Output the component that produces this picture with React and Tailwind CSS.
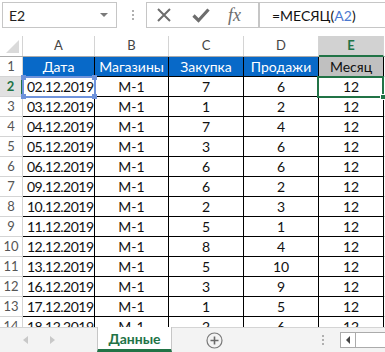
import React from "react";

const ROWS = [
  ["02.12.2019", "М-1", "7", "6", "12"],
  ["03.12.2019", "М-1", "1", "2", "12"],
  ["04.12.2019", "М-1", "7", "4", "12"],
  ["05.12.2019", "М-1", "3", "6", "12"],
  ["06.12.2019", "М-1", "6", "6", "12"],
  ["09.12.2019", "М-1", "6", "2", "12"],
  ["10.12.2019", "М-1", "2", "3", "12"],
  ["11.12.2019", "М-1", "5", "1", "12"],
  ["12.12.2019", "М-1", "8", "4", "12"],
  ["13.12.2019", "М-1", "5", "10", "12"],
  ["16.12.2019", "М-1", "3", "9", "12"],
  ["17.12.2019", "М-1", "1", "5", "12"],
  ["18.12.2019", "М-1", "2", "6", "12"],
];

const COLS = ["A", "B", "C", "D", "E"];
const WIDTHS = ["w-[72px]", "w-[74px]", "w-[75px]", "w-[75px]", "w-[65px]"];

const Toolbar = () => (
  <div className="h-[36px] flex items-start pt-[2px] pl-[2px] bg-white">
    {/* Name box */}
    <div className="w-[115px] h-[26px] border border-[#c6c6c6] flex items-center justify-between pl-[6px] pr-[8px]">
      <span className="text-[14px] text-[#222]">E2</span>
      <span className="w-0 h-0 border-l-[4px] border-r-[4px] border-t-[4px] border-l-transparent border-r-transparent border-t-[#7a7a7a]" />
    </div>
    <div className="w-[29px] h-[26px] flex flex-col items-center justify-center gap-[2px] pl-[2px]">
      <span className="w-[2px] h-[2px] bg-[#b0b0b0]" />
      <span className="w-[2px] h-[2px] bg-[#b0b0b0]" />
      <span className="w-[2px] h-[2px] bg-[#b0b0b0]" />
    </div>
    {/* Function buttons */}
    <div className="w-[113px] h-[26px] border border-[#c6c6c6] flex items-center pl-[9px]">
      <svg width="16" height="16" viewBox="0 0 16 16" className="mr-[20px]">
        <path d="M2 2 L14 14 M14 2 L2 14" stroke="#6d6d6d" strokeWidth="2" />
      </svg>
      <svg width="18" height="16" viewBox="0 0 18 16" className="mr-[18px]">
        <path d="M1.5 8.5 L6.5 13.5 L16.5 2.5" stroke="#6d6d6d" strokeWidth="3.2" fill="none" />
      </svg>
      <span className="text-[18px] italic text-[#6d6d6d] leading-none [font-family:'Liberation_Serif',serif]">fx</span>
    </div>
    {/* Formula */}
    <div className="flex-1 h-[26px] border border-r-0 border-[#c6c6c6] flex items-center pl-[12px] text-[14px] text-[#111]">
      =МЕСЯЦ(<span className="text-[#4a78d0]">A2</span>)
    </div>
  </div>
);

const ColumnHeader = () => (
  <div className="flex h-[21px] border-b border-[#ababab] bg-white">
    <div className="w-[23px] shrink-0 border-r border-[#d4d4d4] flex items-end justify-end pr-[3px] pb-[3px]">
      <svg width="13" height="13" viewBox="0 0 13 13">
        <path d="M13 0 L13 13 L0 13 Z" fill="#dadada" />
      </svg>
    </div>
    {COLS.map((c, i) => (
      <div
        key={c}
        className={`${WIDTHS[i]} shrink-0 border-r border-[#d4d4d4] flex items-center justify-center text-[13px] ${
          c === "E"
            ? "bg-[#d2d2d2] text-[#217346] font-bold border-b-2 border-b-[#217346] -mb-[1px]"
            : "text-[#444]"
        }`}
      >
        {c}
      </div>
    ))}
    <div className="flex-1" />
  </div>
);

const RowHeader = ({ n }) => (
  <div
    className={`w-[23px] shrink-0 border-r border-b border-[#d4d4d4] flex items-center justify-center text-[13px] ${
      n === 2 ? "bg-[#e1e1e1] text-[#217346] font-bold border-r-2 border-r-[#217346]" : "text-[#555]"
    }`}
  >
    {n}
  </div>
);

const Grid = () => (
  <div className="h-[291px] overflow-hidden relative">
    <ColumnHeader />
    {/* header row */}
    <div className="flex h-[20px]">
      <RowHeader n={1} />
      {["Дата", "Магазины", "Закупка", "Продажи"].map((t, i) => (
        <div
          key={t}
          className={`${WIDTHS[i]} shrink-0 bg-[#0869c8] text-white border-r border-b border-black flex items-center justify-center text-[14px]`}
        >
          {t}
        </div>
      ))}
      <div className="w-[65px] shrink-0 bg-[#c0c0c0] text-[#111] border-r border-b border-black flex items-center justify-center text-[14px]">
        Месяц
      </div>
      <div className="flex-1 border-b border-[#d4d4d4]" />
    </div>
    {ROWS.map((r, ri) => (
      <div key={ri} className="flex h-[20px]">
        <RowHeader n={ri + 2} />
        {r.map((v, ci) => (
          <div
            key={ci}
            className={`${WIDTHS[ci]} shrink-0 border-r border-b border-black flex items-center text-[14px] text-[#111] ${
              ci === 0 ? "pl-[4px] tracking-[-0.5px]" : "justify-center"
            }`}
          >
            {v}
          </div>
        ))}
        <div className="flex-1 border-b border-[#d4d4d4]" />
      </div>
    ))}
    {/* A2 reference highlight */}
    <div className="absolute left-[22px] top-[40px] w-[74px] h-[22px] border-2 border-[#6f93db]">
      <span className="absolute -left-[3px] -top-[3px] w-[5px] h-[5px] bg-[#6f93db]" />
      <span className="absolute -right-[3px] -top-[3px] w-[5px] h-[5px] bg-[#6f93db]" />
      <span className="absolute -left-[3px] -bottom-[3px] w-[5px] h-[5px] bg-[#6f93db]" />
      <span className="absolute -right-[3px] -bottom-[3px] w-[5px] h-[5px] bg-[#6f93db]" />
    </div>
    {/* E2 selection */}
    <div className="absolute left-[317px] top-[40px] w-[67px] h-[22px] border-2 border-[#217346]">
      <span className="absolute -right-[4px] -bottom-[4px] w-[6px] h-[6px] bg-[#217346] border border-white" />
    </div>
  </div>
);

const TabBar = () => (
  <div className="h-[25px] flex items-stretch bg-[#f3f3f3] border-t border-[#d4d4d4]">
    <div className="w-[97px] flex items-center pl-[23px] gap-[22px]">
      <span className="w-0 h-0 border-t-[4px] border-b-[4px] border-r-[5px] border-t-transparent border-b-transparent border-r-[#c8c8c8]" />
      <span className="w-0 h-0 border-t-[4px] border-b-[4px] border-l-[5px] border-t-transparent border-b-transparent border-l-[#c8c8c8]" />
    </div>
    <div className="w-[75px] -mt-[1px] bg-white border-x border-[#c6c6c6] border-b-[3px] border-b-[#217346] flex items-center justify-center text-[14px] font-bold text-[#217346]">
      Данные
    </div>
    <div className="w-[84px] flex items-center justify-center pl-[1px]">
      <svg width="17" height="17" viewBox="0 0 17 17">
        <circle cx="8.5" cy="8.5" r="7.5" fill="none" stroke="#7a7a7a" strokeWidth="1.2" />
        <path d="M8.5 4.5 V12.5 M4.5 8.5 H12.5" stroke="#6a6a6a" strokeWidth="1.6" />
      </svg>
    </div>
    <div className="w-[84px] flex flex-col items-end justify-center gap-[2px] pr-[16px]">
      <span className="w-[2px] h-[2px] bg-[#b0b0b0]" />
      <span className="w-[2px] h-[2px] bg-[#b0b0b0]" />
      <span className="w-[2px] h-[2px] bg-[#b0b0b0]" />
    </div>
    <div className="flex-1 flex items-center">
      <div className="flex h-[16px] w-full border-y border-[#ababab] bg-white">
        <div className="w-[16px] border-x border-[#ababab] flex items-center justify-center">
          <span className="w-0 h-0 border-t-[4px] border-b-[4px] border-r-[4px] border-t-transparent border-b-transparent border-r-[#444]" />
        </div>
      </div>
    </div>
  </div>
);

export default function App() {
  return (
    <div className="w-[385px] h-[352px] overflow-hidden bg-white [font-family:Lato,'Liberation_Sans',sans-serif]">
      <Toolbar />
      <Grid />
      <TabBar />
    </div>
  );
}
